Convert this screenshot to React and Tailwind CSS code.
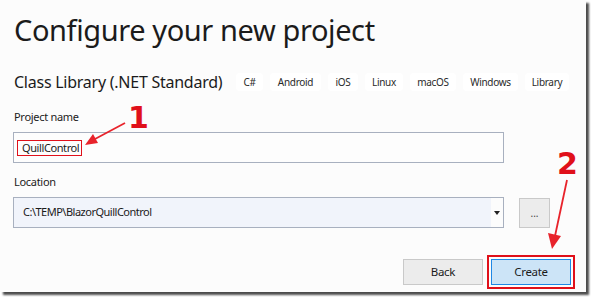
import React from 'react';

const tags = [
    { name: 'C#', w: 'w-[27px]' },
    { name: 'Android', w: 'w-[51px]' },
    { name: 'iOS', w: 'w-[30px]' },
    { name: 'Linux', w: 'w-[38px]' },
    { name: 'macOS', w: 'w-[46px]' },
    { name: 'Windows', w: 'w-[55px]' },
    { name: 'Library', w: 'w-[44px]' },
];

const App = () => {
    return (
        <div className="w-[591px] h-[297px] bg-white relative" style={{ fontFamily: '"Noto Sans", "Open Sans", sans-serif' }}>
            {/* Dialog window with shadow */}
            <div className="w-[586px] h-[292px] bg-[#fcfcfc] shadow-[3px_3px_2px_rgba(0,0,0,0.7)] px-[14px] flex flex-col text-[#1b1b1b]">
                <div className="h-[40px] mt-[10px] text-[29px] tracking-[-0.4px] leading-[40px] whitespace-nowrap">Configure your new project</div>

                <div className="flex items-center mt-[22px] h-[20px]">
                    <div className="w-[222px] text-[16px] tracking-[-0.25px] leading-[20px] whitespace-nowrap">Class Library (.NET Standard)</div>
                    <div className="flex gap-[7px]">
                        {tags.map(tag => (
                            <span key={tag.name} className={`${tag.w} bg-white rounded-[4px] h-[18px] text-center text-[10px] tracking-[-0.3px] leading-[18px] text-[#2a2a2a]`}>{tag.name}</span>
                        ))}
                    </div>
                </div>

                {/* Project name */}
                <div className="text-[11px] tracking-[-0.3px] leading-[14px] mt-[18px]">Project name</div>
                <div className="mt-[8px] w-[491px] h-[31px] border border-[#a8b0bf] bg-[#fdfdfd] flex items-center pl-[3px] -ml-[1px]">
                    <span className="border-[1.5px] border-[#e0101a] pl-[4px] pr-[2px] h-[16px] text-[11px] tracking-[-0.4px] leading-[13px]">QuillControl</span>
                </div>

                {/* Location */}
                <div className="text-[11px] tracking-[-0.3px] leading-[14px] mt-[12px]">Location</div>
                <div className="flex items-center mt-[8px] -ml-[1px]">
                    <div className="w-[491px] h-[31px] border border-[#a8b0bf] bg-[#f1f4fb] flex items-center">
                        <span className="flex-1 pl-[9px] text-[11px] tracking-[-0.5px]">C:\TEMP\BlazorQuillControl</span>
                        <span className="w-[12px] h-full bg-[#fcfcfc] flex items-center justify-center">
                            <svg width="6" height="4" viewBox="0 0 6 4"><path d="M0 0h6L3 4z" fill="#222" /></svg>
                        </span>
                    </div>
                    <button className="ml-[15px] w-[31px] h-[30px] border border-[#c9c9c9] bg-[#ececec] text-[10px] text-[#444] leading-none">...</button>
                </div>

                {/* Buttons */}
                <div className="flex justify-end items-center mt-[27px] -mr-[3px] gap-[4px]">
                    <button className="w-[80px] h-[26px] border border-[#c9c9c9] bg-[#ececec] text-[11.5px] tracking-[-0.3px]">Back</button>
                    <div className="border-2 border-[#e0101a] p-[2px]">
                        <button className="w-[80px] h-[26px] border border-[#1e88e5] bg-[#cce4f7] text-[11.5px] tracking-[-0.3px] block">Create</button>
                    </div>
                </div>
            </div>

            {/* Annotation overlays */}
            <span className="absolute left-[128px] top-[103px] text-[30px] font-bold text-[#e0101a] leading-none" style={{ fontFamily: '"DejaVu Sans", sans-serif' }}>1</span>
            <span className="absolute left-[557px] top-[149px] text-[30px] font-bold text-[#e0101a] leading-none" style={{ fontFamily: '"DejaVu Sans", sans-serif' }}>2</span>
            <svg className="absolute left-0 top-0" width="591" height="297">
                <line x1="125" y1="123" x2="95" y2="139" stroke="#e8232b" strokeWidth="1.8" />
                <path d="M85 145 L93 134 L98 143 Z" fill="#e8232b" />
                <line x1="567" y1="180" x2="555" y2="236" stroke="#e8232b" strokeWidth="1.8" />
                <path d="M552 249 L548 233 L561 236 Z" fill="#e8232b" />
            </svg>
        </div>
    );
};

export default App;
